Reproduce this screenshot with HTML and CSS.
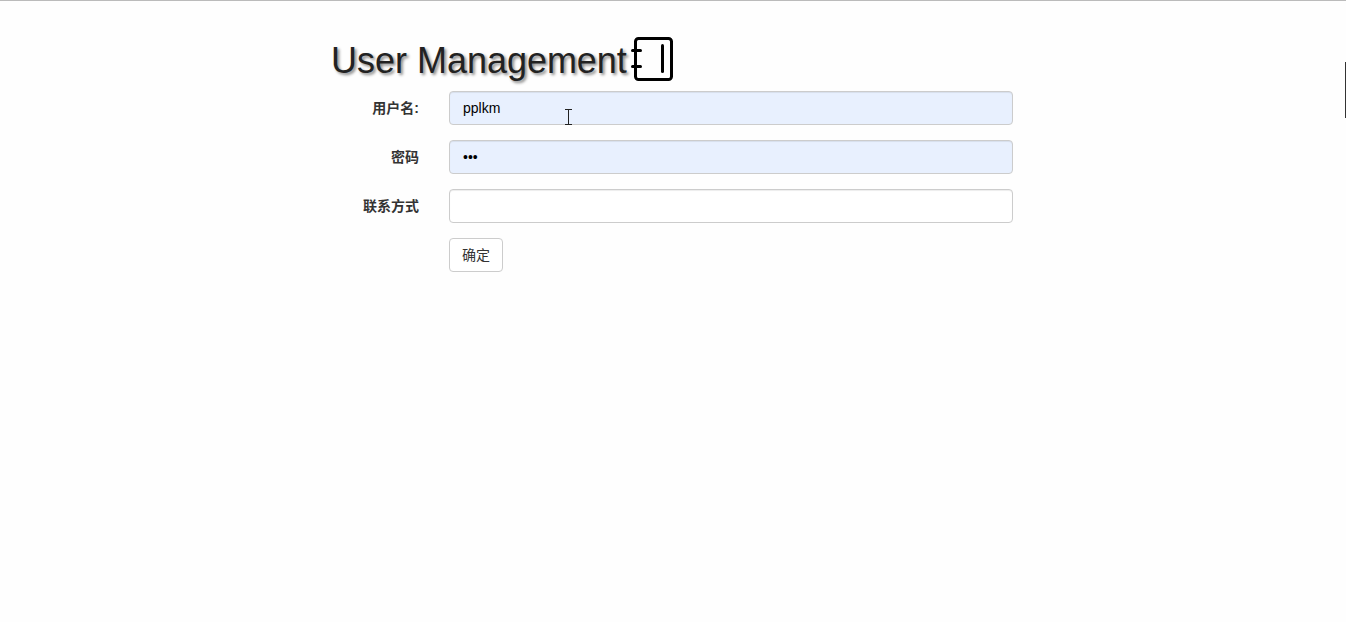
FILE: index.html
```html
<!DOCTYPE html>
<html lang="zh">
<head>
<meta charset="utf-8">
<title>User Management</title>
<link rel="stylesheet" href="styles.css">
</head>
<body>
<div class="container">
  <h1 class="title">User Management<svg class="book" width="42" height="46" viewBox="0 0 42 46" fill="none" stroke="#000" stroke-width="3" stroke-linecap="round" stroke-linejoin="round"><rect x="4.5" y="2.5" width="36" height="41" rx="3"/><path d="M31.500 9.500V35.500"/><path d="M1.500 14.500H9.500"/><path d="M1.500 30.500H9.500"/></svg></h1>
  <form class="form">
    <div class="row"><label class="label">用户名:</label><input class="field filled" type="text" value="pplkm"></div>
    <div class="row"><label class="label">密码</label><input class="field filled" type="password" value="abc"></div>
    <div class="row"><label class="label">联系方式</label><input class="field" type="text"></div>
    <div class="row"><span class="label"></span><button class="btn" type="button">确定</button></div>
  </form>
</div>
<svg class="cursor" width="9" height="16" viewBox="0 0 9 16" fill="none" stroke="#222" stroke-width="1"><path d="M1 .5H8M4.500 .5V15.500M1 15.500H8"/></svg>
<div class="edge"></div>
</body>
</html>
```
FILE: styles.css
```css
html, body { margin: 0; padding: 0; height: 100%; overflow: hidden; }
body {
  background: #fefefe;
  border-top: 1px solid #bbb;
  box-sizing: border-box;
  font-family: "Liberation Sans", "Noto Sans CJK SC", sans-serif;
  font-size: 14px;
  color: #333;
}
.container { width: 682px; margin-left: 331px; }
.title {
  display: flex;
  align-items: center;
  margin: 37px 0 8px;
  height: 45px;
  font-size: 36px;
  font-weight: 400;
  line-height: 45px;
  color: #222;
  text-shadow: 2px 2px 3px #888;
  letter-spacing: -0.02px;
}
.book { margin-left: 4px; margin-top: -3px; flex: none; }
.form { display: flex; flex-direction: column; gap: 15px; }
.row { display: flex; align-items: center; gap: 30px; }
.label { width: 88px; height: 20px; line-height: 20px; margin-top: -1px; text-align: right; font-weight: 700; flex: none; }
.field {
  flex: 1;
  height: 34px;
  box-sizing: border-box;
  padding: 0 13px;
  border: 1px solid #ccc;
  border-radius: 4px;
  background: #fff;
  box-shadow: inset 0 1px 1px rgba(0, 0, 0, .075);
  font: 14px "Liberation Sans", sans-serif;
  color: #000;
  outline: 0;
}
.filled { background: #e8f0fe; }
.btn {
  height: 34px;
  width: 54px;
  padding: 0 0 2px;
  border: 1px solid #ccc;
  border-radius: 4px;
  background: #fff;
  font: 14px "Liberation Sans", "Noto Sans CJK SC", sans-serif;
  color: #333;
}
.cursor { position: absolute; left: 564px; top: 109px; }
.edge { position: absolute; left: 1345px; top: 62px; width: 1px; height: 56px; background: #333; }
```
